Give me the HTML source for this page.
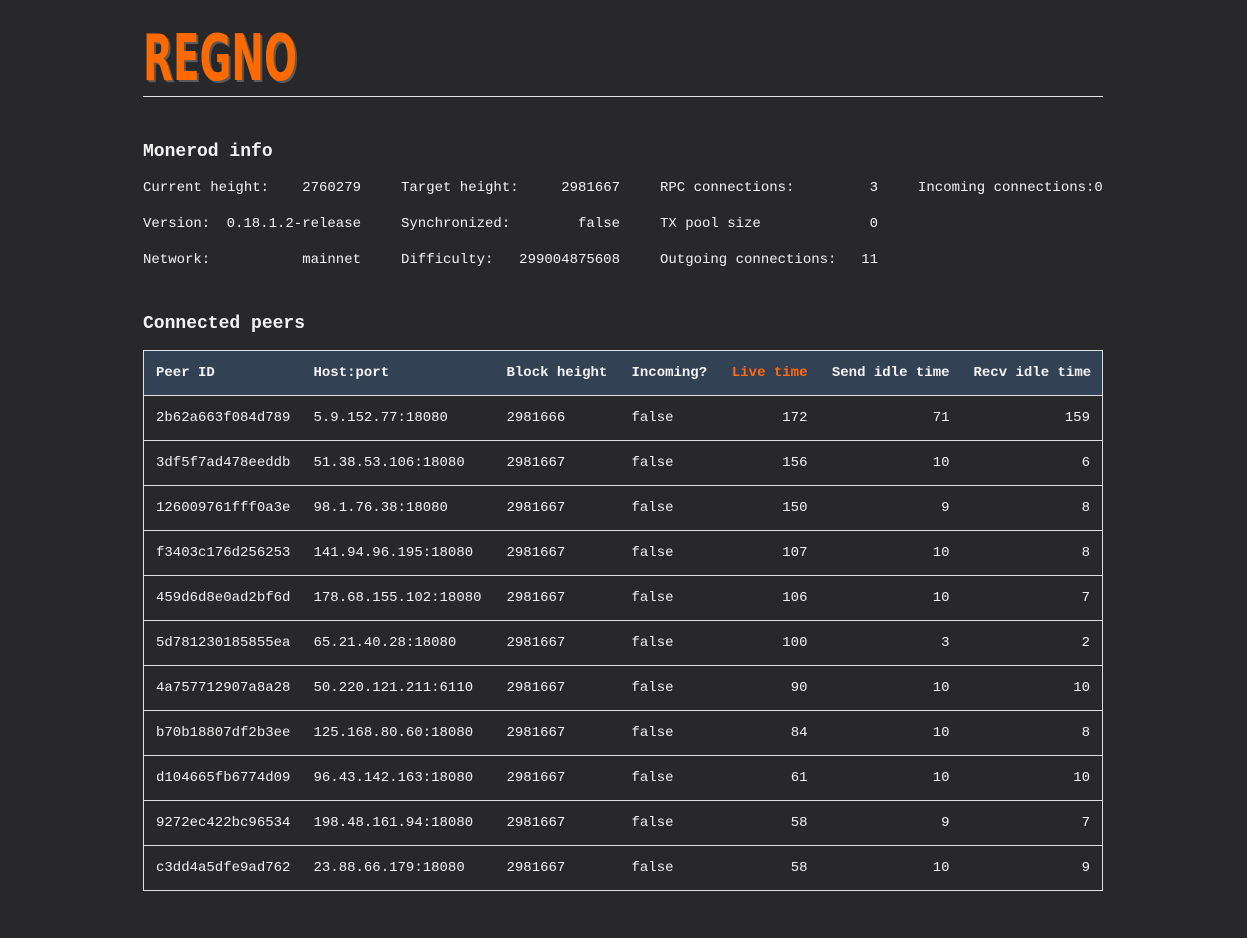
<!DOCTYPE html>
<html><head><meta charset="utf-8"><style>
html,body{margin:0;padding:0;background:#28282b;width:1247px;height:938px;overflow:hidden}
body{font-family:"Liberation Mono",monospace;font-size:14px;color:#f2f2f2;position:relative}
.logo{position:absolute;left:140px;top:24px}
.hr{position:absolute;left:143px;top:96px;width:960px;height:1px;background:#e6e6e6}
h2{position:absolute;left:143px;margin:0;font-size:18px;font-weight:bold;line-height:22px}
.cell{position:absolute;width:218px;display:flex;justify-content:space-between;line-height:18px;white-space:pre}
table{position:absolute;left:143px;top:350px;width:959px;border-collapse:collapse;table-layout:fixed;border:1px solid #e0e0e0}
td,th{height:44px;padding:0 12px;border-bottom:1px solid #e0e0e0;text-align:left;white-space:nowrap}
th{background:#334155;font-weight:bold}
.r{text-align:right}
.o{color:#ff6a13}
</style></head><body>
<svg class="logo" width="170" height="62" viewBox="0 0 170 62">
<text x="5" y="58" font-family="'Liberation Sans Narrow','DejaVu Sans Condensed','Liberation Sans',sans-serif" font-weight="bold" font-size="64" textLength="154" lengthAdjust="spacingAndGlyphs" fill="#5a5a5a">REGNO</text>
<text x="3" y="56" font-family="'Liberation Sans Narrow','DejaVu Sans Condensed','Liberation Sans',sans-serif" font-weight="bold" font-size="64" textLength="154" lengthAdjust="spacingAndGlyphs" fill="#ff6a00">REGNO</text>
</svg>
<div class="hr"></div>
<h2 style="top:141px">Monerod info</h2>
<div class="cell" style="left:143px;top:179px"><span>Current height:</span><span>2760279</span></div>
<div class="cell" style="left:401px;top:179px;width:219px"><span>Target height:</span><span>2981667</span></div>
<div class="cell" style="left:660px;top:179px"><span>RPC connections:</span><span>3</span></div>
<div class="cell" style="left:918px;top:179px;width:190px"><span>Incoming connections:0</span></div>
<div class="cell" style="left:143px;top:215px"><span>Version:</span><span>0.18.1.2-release</span></div>
<div class="cell" style="left:401px;top:215px;width:219px"><span>Synchronized:</span><span>false</span></div>
<div class="cell" style="left:660px;top:215px"><span>TX pool size</span><span>0</span></div>
<div class="cell" style="left:143px;top:251px"><span>Network:</span><span>mainnet</span></div>
<div class="cell" style="left:401px;top:251px;width:219px"><span>Difficulty:</span><span>299004875608</span></div>
<div class="cell" style="left:660px;top:251px"><span>Outgoing connections:</span><span>11</span></div>
<h2 style="top:313px">Connected peers</h2>
<table>
<colgroup><col style="width:158px"><col style="width:193px"><col style="width:125px"><col style="width:100px"><col style="width:100px"><col style="width:142px"><col style="width:141px"></colgroup>
<tr><th>Peer ID</th><th>Host:port</th><th>Block height</th><th>Incoming?</th><th class="r o">Live time</th><th class="r">Send idle time</th><th class="r">Recv idle time</th></tr>
<tr><td>2b62a663f084d789</td><td>5.9.152.77:18080</td><td>2981666</td><td>false</td><td class="r">172</td><td class="r">71</td><td class="r">159</td></tr>
<tr><td>3df5f7ad478eeddb</td><td>51.38.53.106:18080</td><td>2981667</td><td>false</td><td class="r">156</td><td class="r">10</td><td class="r">6</td></tr>
<tr><td>126009761fff0a3e</td><td>98.1.76.38:18080</td><td>2981667</td><td>false</td><td class="r">150</td><td class="r">9</td><td class="r">8</td></tr>
<tr><td>f3403c176d256253</td><td>141.94.96.195:18080</td><td>2981667</td><td>false</td><td class="r">107</td><td class="r">10</td><td class="r">8</td></tr>
<tr><td>459d6d8e0ad2bf6d</td><td>178.68.155.102:18080</td><td>2981667</td><td>false</td><td class="r">106</td><td class="r">10</td><td class="r">7</td></tr>
<tr><td>5d781230185855ea</td><td>65.21.40.28:18080</td><td>2981667</td><td>false</td><td class="r">100</td><td class="r">3</td><td class="r">2</td></tr>
<tr><td>4a757712907a8a28</td><td>50.220.121.211:6110</td><td>2981667</td><td>false</td><td class="r">90</td><td class="r">10</td><td class="r">10</td></tr>
<tr><td>b70b18807df2b3ee</td><td>125.168.80.60:18080</td><td>2981667</td><td>false</td><td class="r">84</td><td class="r">10</td><td class="r">8</td></tr>
<tr><td>d104665fb6774d09</td><td>96.43.142.163:18080</td><td>2981667</td><td>false</td><td class="r">61</td><td class="r">10</td><td class="r">10</td></tr>
<tr><td>9272ec422bc96534</td><td>198.48.161.94:18080</td><td>2981667</td><td>false</td><td class="r">58</td><td class="r">9</td><td class="r">7</td></tr>
<tr><td>c3dd4a5dfe9ad762</td><td>23.88.66.179:18080</td><td>2981667</td><td>false</td><td class="r">58</td><td class="r">10</td><td class="r">9</td></tr>
</table>
</body></html>
